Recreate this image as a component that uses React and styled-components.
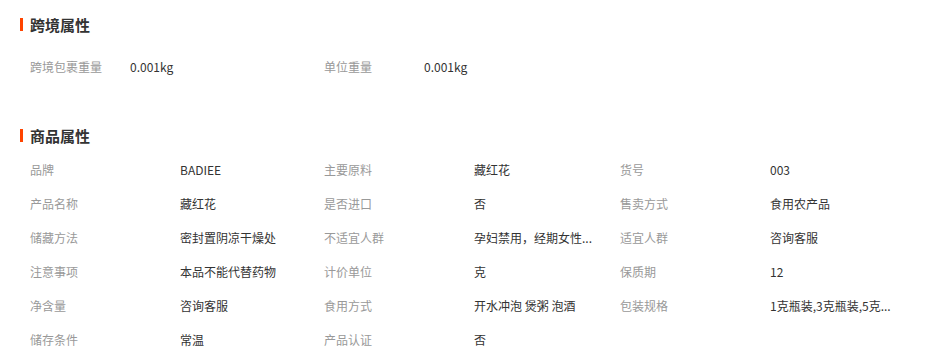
import React from 'react'
import styled, { createGlobalStyle } from 'styled-components'

const crossAttrs = [
  ['跨境包裹重量', '0.001kg'],
  ['单位重量', '0.001kg'],
]

// values as shown on the page (long ones are already cut with "...")
const productAttrs = [
  ['品牌', 'BADIEE'], ['主要原料', '藏红花'], ['货号', '003'],
  ['产品名称', '藏红花'], ['是否进口', '否'], ['售卖方式', '食用农产品'],
  ['储藏方法', '密封置阴凉干燥处'], ['不适宜人群', '孕妇禁用，经期女性...'], ['适宜人群', '咨询客服'],
  ['注意事项', '本品不能代替药物'], ['计价单位', '克'], ['保质期', '12'],
  ['净含量', '咨询客服'], ['食用方式', '开水冲泡 煲粥 泡酒'], ['包装规格', '1克瓶装,3克瓶装,5克...'],
  ['储存条件', '常温'], ['产品认证', '否'],
]

function App() {
  return (
    <>
      <GlobalStyle />
      <Page>
        <Section>
          <Title>跨境属性</Title>
          <Grid>
            {crossAttrs.map(([k, v]) => (
              <Item key={k}>
                <Label width={100}>{k}</Label>
                <Value>{v}</Value>
              </Item>
            ))}
          </Grid>
        </Section>
        <Section second>
          <Title>商品属性</Title>
          <Grid>
            {productAttrs.map(([k, v]) => (
              <Item key={k}>
                <Label width={150}>{k}</Label>
                <Value>{v}</Value>
              </Item>
            ))}
          </Grid>
        </Section>
      </Page>
    </>
  )
}

export default App

const GlobalStyle = createGlobalStyle`
body{
  margin:0;
  background:#fff;
  font-family:"Microsoft YaHei","Noto Sans CJK SC",sans-serif;
  font-size:12px;
  color:#333;
}
`

const Page = styled.div`
width:928px;
padding:14px 0 0 20px;
box-sizing:border-box;
`

const Section = styled.div`
display:flex;
flex-direction:column;
gap:${p => (p.second ? '7px' : '15px')};
margin-top:${p => (p.second ? '42px' : '0')};
`

const Title = styled.h3`
margin:0;
display:flex;
align-items:center;
height:20px;
font-size:15px;
font-weight:bold;
color:#333;
&::before{
  content:'';
  width:3px;
  height:13px;
  background:#ff4400;
  margin-right:7px;
}
`

const Grid = styled.div`
display:grid;
grid-template-columns:294px 296px 296px;
padding-left:10px;
`

const Item = styled.div`
display:flex;
align-items:center;
height:34px;
`

const Label = styled.span`
flex:0 0 ${p => p.width}px;
color:#999;
white-space:nowrap;
`

const Value = styled.span`
color:#333;
white-space:nowrap;
`
